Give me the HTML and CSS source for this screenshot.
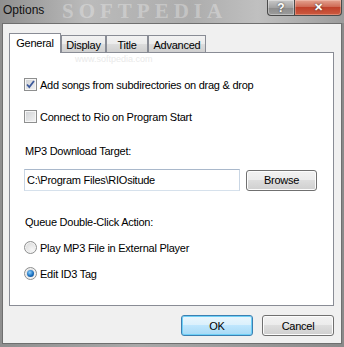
FILE: index.html
```html
<!DOCTYPE html>
<html lang="en">
<head>
    <meta charset="UTF-8">
    <title>Options</title>
    <link rel="stylesheet" href="styles.css">
</head>
<body>
    <div class="window">
        <div class="titlebar">
            <span class="title">Options</span>
            <span class="mark-big">SOFTPEDIA</span>
            <div class="caption-btns">
                <span class="cap-btn cap-help">?</span>
                <span class="cap-btn cap-close">&#x2715;</span>
            </div>
        </div>

        <div class="client">
            <span class="mark-url">www.softpedia.com</span>

            <div class="tabs">
                <span class="tab tab-on">General</span>
                <span class="tab">Display</span>
                <span class="tab">Title</span>
                <span class="tab">Advanced</span>
            </div>

            <div class="panel">
                <label class="row row-first">
                    <span class="check">
                        <svg width="11" height="11" viewBox="0 0 11 11"><path d="M2 5.5 L4.3 8 L9 2" fill="none" stroke="#3d5a9c" stroke-width="1.8"/></svg>
                    </span>
                    Add songs from subdirectories on drag &amp; drop
                </label>
                <label class="row row-second">
                    <span class="check"></span>
                    Connect to Rio on Program Start
                </label>

                <div class="caption caption-target">MP3 Download Target:</div>
                <div class="path-row">
                    <span class="textbox">C:\Program Files\RIOsitude</span>
                    <span class="btn btn-browse">Browse</span>
                </div>

                <div class="caption caption-queue">Queue Double-Click Action:</div>
                <label class="row row-radio1">
                    <span class="radio"></span>
                    Play MP3 File in External Player
                </label>
                <label class="row row-radio2">
                    <span class="radio radio-on"><span class="dot"></span></span>
                    Edit ID3 Tag
                </label>
            </div>

            <div class="actions">
                <span class="btn btn-default">OK</span>
                <span class="btn">Cancel</span>
            </div>
        </div>
    </div>
</body>
</html>
```

FILE: styles.css
```css
body {
    margin: 0;
    padding: 0;
    width: 344px;
    height: 347px;
    overflow: hidden;
    font-family: 'Liberation Sans', Arial, sans-serif;
    font-size: 11px;
    letter-spacing: -0.25px;
    color: #000;
}
.window {
    width: 344px;
    height: 347px;
    box-sizing: border-box;
    padding: 0 2px 3px 2px;
    display: flex;
    flex-direction: column;
    background: linear-gradient(90deg, #8f8f8f, #a9a9a9 40%, #9a9a9a 70%, #8a8a8a);
}
.titlebar {
    height: 23px;
    display: flex;
    align-items: flex-start;
    position: relative;
    background: linear-gradient(90deg, #8f8f8f 0%, #bbbbbb 25%, #acacac 55%, #c0c0c0 75%, #9c9c9c 100%);
    margin: 0 -2px;
    padding: 0 2px;
}
.title {
    font-size: 12px;
    line-height: 12px;
    letter-spacing: 0;
    margin: 4px 0 0 1px;
    color: #111;
    position: relative;
    z-index: 1;
}
.mark-big {
    position: absolute;
    left: 62px;
    top: 1px;
    font-family: 'Liberation Serif', serif;
    font-weight: bold;
    font-size: 21px;
    line-height: 21px;
    letter-spacing: 5px;
    color: rgba(255, 255, 255, 0.3);
    pointer-events: none;
}
.caption-btns {
    margin-left: auto;
    display: flex;
    position: relative;
    z-index: 1;
}
.cap-btn {
    height: 16px;
    box-sizing: border-box;
    border: 1px solid #4a4a4a;
    border-top: none;
    color: #fff;
    font-weight: bold;
    letter-spacing: 0;
    display: flex;
    align-items: center;
    justify-content: center;
    text-shadow: 0 0 2px #333;
}
.cap-help {
    width: 27px;
    font-size: 12px;
    border-radius: 0 0 0 4px;
    border-right: none;
    background: linear-gradient(#c9c9c9, #a3a3a3 50%, #8c8c8c 51%, #9c9c9c);
    box-shadow: inset 0 0 0 1px rgba(255, 255, 255, 0.35);
}
.cap-close {
    width: 48px;
    font-size: 11px;
    border-radius: 0 0 4px 0;
    background: linear-gradient(#e4a391, #cf6a55 45%, #c0412b 50%, #cc5a3f);
    box-shadow: inset 0 0 0 1px rgba(255, 220, 210, 0.35);
}
.client {
    flex: 1;
    position: relative;
    background: #f0f0f0;
    border: 1px solid #6f6f6f;
    padding: 9px 7px 7px 6px;
    display: flex;
    flex-direction: column;
}
.mark-url {
    position: absolute;
    left: 72px;
    top: 30px;
    font-size: 9px;
    letter-spacing: 0;
    color: rgba(228, 228, 228, 0.8);
    pointer-events: none;
    z-index: 2;
}
.tabs {
    display: flex;
    align-items: flex-end;
    height: 19px;
}
.tab {
    height: 17px;
    box-sizing: border-box;
    border: 1px solid #898c95;
    border-bottom: none;
    background: linear-gradient(#f2f2f2, #ebebeb 50%, #dddddd 50%, #cfcfcf);
    display: flex;
    align-items: center;
    justify-content: center;
    padding-top: 1px;
}
.tab:nth-child(2) { width: 45px; }
.tab:nth-child(3) { width: 42px; }
.tab:nth-child(4) { width: 58px; }
.tab-on {
    width: 52px;
    height: 20px;
    margin-bottom: -1px;
    background: #fff;
    position: relative;
    z-index: 1;
    padding-top: 0;
    padding-bottom: 1px;
}
.panel {
    height: 254px;
    box-sizing: border-box;
    border: 1px solid #898c95;
    background: #fff;
    padding: 25px 0 0 14px;
    display: flex;
    flex-direction: column;
    align-items: flex-start;
}
.row {
    display: flex;
    align-items: center;
    height: 13px;
    gap: 3px;
}
.row-second { margin-top: 19px; }
.row-radio1 { margin-top: 12px; }
.row-radio2 { margin-top: 13px; }
.check {
    width: 13px;
    height: 13px;
    box-sizing: border-box;
    border: 1px solid #8e8f8f;
    background: linear-gradient(135deg, #cfd1d4, #f3f3f3);
    box-shadow: inset 0 0 0 1px #f6f6f6;
    display: flex;
    align-items: center;
    justify-content: center;
}
.radio {
    width: 13px;
    height: 13px;
    box-sizing: border-box;
    border: 1px solid #8e8f8f;
    border-radius: 50%;
    background: radial-gradient(circle at 65% 70%, #f6f6f6, #d4d4d4);
    box-shadow: inset 0 0 0 1px #f4f4f4;
    display: flex;
    align-items: center;
    justify-content: center;
}
.dot {
    width: 7px;
    height: 7px;
    border-radius: 50%;
    background: radial-gradient(circle at 40% 35%, #8fd3ff, #1a6fbf 55%, #0d3f7a);
}
.caption {
    height: 13px;
    line-height: 13px;
    padding-left: 1px;
}
.caption-target { margin-top: 22px; }
.caption-queue { margin-top: 25px; }
.path-row {
    display: flex;
    align-items: center;
    gap: 6px;
    margin-top: 11px;
}
.textbox {
    width: 216px;
    height: 22px;
    box-sizing: border-box;
    border: 1px solid;
    border-color: #a9b8cb #c9d6e4 #d6e1ec #c9d6e4;
    padding-left: 2px;
    display: flex;
    align-items: center;
}
.btn {
    width: 72px;
    height: 21px;
    box-sizing: border-box;
    border: 1px solid #707070;
    border-radius: 3px;
    background: linear-gradient(#f2f2f2, #ebebeb 50%, #dddddd 50%, #cfcfcf);
    box-shadow: inset 0 0 0 1px #fcfcfc;
    display: flex;
    align-items: center;
    justify-content: center;
}
.btn-browse { width: 71px; }
.actions {
    display: flex;
    justify-content: flex-end;
    gap: 9px;
    margin-top: 9px;
}
.btn-default {
    border-color: #3c7fb1;
    background: linear-gradient(#eaf6fd, #d9f0fc 50%, #bee6fd 50%, #a7d9f5);
    box-shadow: inset 0 0 0 1px #6ed0f7;
}
```
